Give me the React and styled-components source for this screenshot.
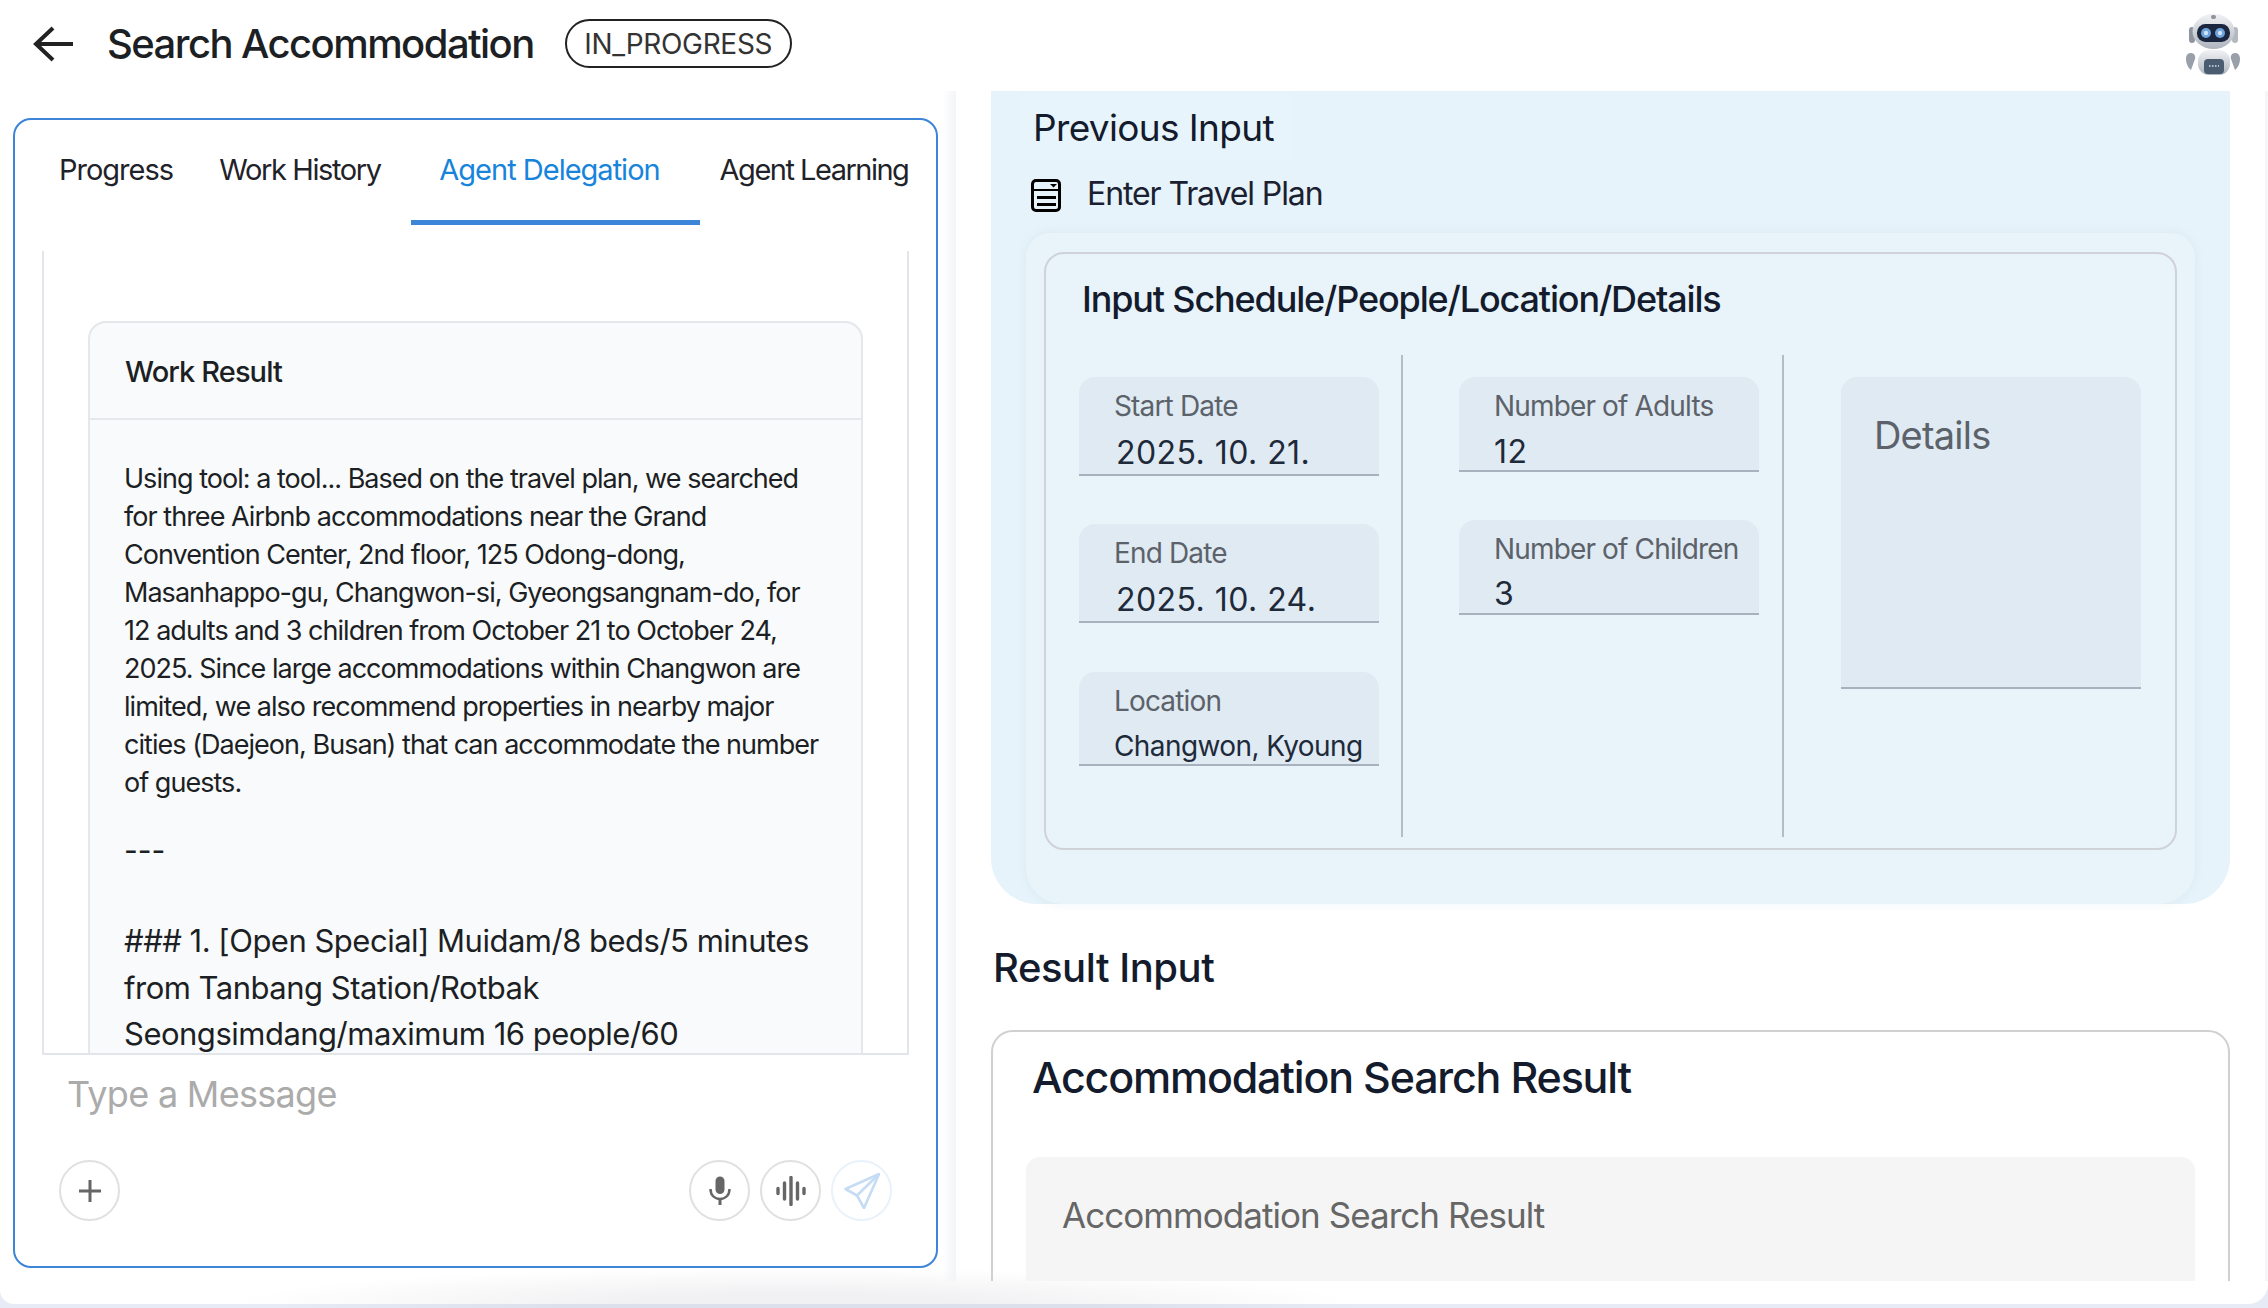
import React from 'react'
import styled, { createGlobalStyle } from 'styled-components'

const GlobalStyle = createGlobalStyle`
  html, body {
    margin: 0;
    padding: 0;
    background: #e6ebf6;
    font-family: Inter, "Noto Sans", sans-serif;
  }
  * { box-sizing: border-box; }
`

const Page = styled.div`
  width: 2268px;
  height: 1308px;
  padding-bottom: 4px;
  overflow: hidden;
  background: linear-gradient(90deg, #e6ebf6 12%, #dbe0ec 25%, #dbe0ec 48%, #e6ebf6 60%);
`
const Sheet = styled.div`
  width: 100%;
  height: 100%;
  background: radial-gradient(ellipse 560px 36px at 795px 100%, #f1f1f3 30%, rgba(255, 255, 255, 0)), #fff;
  border-radius: 0 0 20px 14px;
  overflow: hidden;
  display: flex;
  flex-direction: column;
`
const TopBar = styled.header`
  height: 91px;
  flex: none;
  display: flex;
  align-items: center;
  padding: 0 27px 4px 33px;
`
const BackButton = styled.div`
  width: 41px;
  height: 36px;
  margin-right: 33px;
  color: #222;
  display: flex;
`
const Title = styled.h1`
  margin: 0;
  font-size: 40px;
  font-weight: 500;
  letter-spacing: -1.56px;
  color: #1c1f24;
`
const StatusPill = styled.div`
  margin-left: 31px;
  height: 49px;
  width: 227px;
  border: 2px solid #222;
  border-radius: 25px;
  display: flex;
  align-items: center;
  justify-content: center;
  font-size: 28px;
  letter-spacing: -0.3px;
  color: #333;
`
const Robot = styled.svg`
  margin-left: auto;
  width: 56px;
  height: 62px;
`
const Body = styled.div`
  height: 1190px;
  flex: none;
  display: flex;
`
const LeftColumn = styled.div`
  width: 956px;
  flex: none;
  padding: 27px 18px 0 13px;
  background: linear-gradient(90deg, rgba(243, 244, 247, 0), #f3f4f7) right top / 13px 100% no-repeat;
`
const ChatPanel = styled.section`
  height: 1150px;
  border: 2px solid #3d85d8;
  border-radius: 18px;
  display: flex;
  flex-direction: column;
  padding: 0 27px;
`
const Tabs = styled.nav`
  height: 105px;
  flex: none;
  display: flex;
  margin: 0 -20px 26px;
  padding-left: 29px;
`
const Tab = styled.div`
  width: ${p => p.$width}px;
  margin-left: ${p => p.$gap || 0}px;
  height: 105px;
  padding: 32px ${p => (p.$active ? 12 : 0)}px 0 0;
  text-align: center;
  font-size: 29px;
  letter-spacing: ${p => p.$spacing || '-1px'};
  color: ${p => (p.$active ? '#1784dc' : '#1f2329')};
  border-bottom: ${p => (p.$active ? '5px solid #3d85d8' : 'none')};
`
const ScrollArea = styled.div`
  height: 804px;
  flex: none;
  border: 2px solid #e2e5ea;
  border-top: none;
  padding: 70px 44px 0;
  overflow: hidden;
`
const ResultCard = styled.article`
  background: #f9fafb;
  border: 2px solid #e5e7eb;
  border-radius: 18px;
  min-height: 900px;
`
const CardHead = styled.div`
  height: 97px;
  border-bottom: 2px solid #e5e7eb;
  padding: 2px 35px 0;
  display: flex;
  align-items: center;
  font-size: 29px;
  font-weight: 500;
  letter-spacing: -0.9px;
  color: #1c1f24;
`
const CardBody = styled.div`
  padding: 40px 20px 0 34px;
  color: #1c1f24;
`
const Para = styled.p`
  margin: 0 0 29px;
  font-size: 27px;
  line-height: 38px;
  letter-spacing: -0.97px;
  white-space: nowrap;
`
const Rule = styled.p`
  margin: 0 0 49px;
  font-size: 30px;
  line-height: 38px;
`
const HeadingLine = styled.p`
  margin: 0;
  font-size: 31px;
  line-height: 46.5px;
  letter-spacing: -0.5px;
  white-space: nowrap;
`
const Composer = styled.div`
  flex: 1;
  display: flex;
  flex-direction: column;
  padding: 13px 17px 0;
`
const Placeholder = styled.div`
  height: 52px;
  padding-left: 8px;
  font-size: 36px;
  line-height: 52px;
  letter-spacing: -0.7px;
  color: #ababab;
`
const ActionRow = styled.div`
  margin-top: 40px;
  display: flex;
  align-items: center;
  gap: 10px;
`
const RoundButton = styled.div`
  width: 61px;
  height: 61px;
  border-radius: 50%;
  border: 2px solid ${p => (p.$faded ? '#e9f1fb' : '#e0e0e0')};
  color: ${p => (p.$faded ? '#c6dcf5' : '#666')};
  display: flex;
  align-items: center;
  justify-content: center;
  &:first-child { margin-right: auto; }
`
const RightColumn = styled.div`
  flex: 1;
  overflow: hidden;
  padding: 0 35px 0 35px;
  border-right: 3px solid #f6f6f8;
`
const PreviousPanel = styled.section`
  height: 813px;
  background: #e7f3fa;
  border-radius: 0 0 46px 46px;
  padding: 3px 35px 0;
`
const PreviousTitle = styled.div`
  width: 273px;
  height: 66px;
  margin-left: -6px;
  padding-left: 13px;
  background: #e7f4fb;
  display: flex;
  align-items: center;
  font-size: 37px;
  font-weight: 400;
  letter-spacing: -0.65px;
  color: #131b2c;
`
const StepRow = styled.div`
  display: flex;
  align-items: center;
  margin-top: 7px;
  height: 52px;
  gap: 26px;
  padding-left: 5px;
  font-size: 32px;
  letter-spacing: -1.1px;
  color: #1a2030;
`
const StepIcon = styled.svg`
  width: 30px;
  height: 33px;
  flex: none;
  margin-top: 4px;
`
const InnerPanel = styled.div`
  margin-top: 14px;
  height: 671px;
  background: #e8f3fa;
  border-radius: 24px 24px 36px 36px;
  box-shadow: 0 0 10px rgba(150, 170, 190, 0.14);
  padding: 19px 18px 0;
`
const FormCard = styled.div`
  height: 598px;
  border: 2px solid #cfd3d7;
  border-radius: 20px;
  padding: 0 33px;
`
const FormTitle = styled.h2`
  margin: 0;
  height: 101px;
  display: flex;
  align-items: center;
  padding: 0 0 12px 3px;
  font-size: 36px;
  font-weight: 500;
  letter-spacing: -1.15px;
  color: #131b2c;
`
const FormGrid = styled.div`
  display: grid;
  grid-template-columns: 324px 381px 1fr;
  height: 482px;
`
const FormColumn = styled.div`
  padding: 22px 0 0 ${p => p.$inset || 0}px;
  border-right: ${p => (p.$line ? '2px solid #b4bcc4' : 'none')};
  display: flex;
  flex-direction: column;
  align-items: flex-start;
`
const Field = styled.div`
  width: 300px;
  height: ${p => p.$height}px;
  margin-bottom: ${p => p.$gap || 0}px;
  background: #e0eaf3;
  border-bottom: 2px solid #a7b2be;
  border-radius: 16px 16px 0 0;
  padding: 10px 6px 0 35px;
  overflow: hidden;
  white-space: nowrap;
`
const FieldLabel = styled.div`
  font-size: 28px;
  line-height: 38px;
  letter-spacing: -0.85px;
  color: #5c6269;
`
const FieldValue = styled.div`
  margin: ${p => p.$top || 6}px 0 0 ${p => p.$left || 0}px;
  font-size: ${p => p.$size || 32}px;
  line-height: 40px;
  letter-spacing: ${p => p.$spacing || '0.4px'};
  color: #1e2a3a;
`
const DetailsLabel = styled.div`
  font-size: 38px;
  margin: 25px 0 0 -2px;
  letter-spacing: -0.8px;
  color: #5c6269;
`
const ResultHeading = styled.h2`
  margin: 0;
  height: 126px;
  display: flex;
  align-items: center;
  padding-left: 2px;
  font-size: 40px;
  font-weight: 500;
  letter-spacing: -0.45px;
  color: #131b2c;
`
const ResultPanel = styled.section`
  height: 400px;
  border: 2px solid #d0d0d0;
  border-radius: 22px;
  padding: 0 33px;
`
const ResultTitle = styled.h3`
  margin: 0;
  height: 125px;
  padding: 0 0 36px 6px;
  display: flex;
  align-items: center;
  font-size: 43px;
  font-weight: 500;
  letter-spacing: -1.2px;
  color: #131b2c;
`
const ResultField = styled.div`
  height: 260px;
  background: #f5f5f5;
  border-radius: 14px;
  padding: 37px 36px;
  font-size: 35px;
  letter-spacing: -0.95px;
  color: #666;
`

const MicIcon = () => (
  <svg width="22" height="29" viewBox="0 0 22 29" fill="none">
    <rect x="6.5" y="0.5" width="9" height="17.5" rx="4.5" fill="currentColor" />
    <path d="M1.5 13c0 6 4 10 9.5 10s9.5-4 9.5-10" stroke="currentColor" strokeWidth="2.5" />
    <path d="M11 23v6" stroke="currentColor" strokeWidth="3" />
  </svg>
)

const WaveIcon = () => (
  <svg width="30" height="30" viewBox="0 0 30 30" fill="none" stroke="currentColor" strokeWidth="3.4" strokeLinecap="round">
    <path d="M2 12.5v5M8.5 7v16M15 1.5v27M21.5 7v16M28 12.5v5" />
  </svg>
)

const SendIcon = () => (
  <svg width="36" height="36" viewBox="0 0 36 36" fill="none" stroke="currentColor" strokeWidth="2.6" strokeLinejoin="round">
    <path d="M35 1 1.5 16l11.5 6.5L20 35Z" />
    <path d="M35 1 13 22.5" />
  </svg>
)

const RobotIcon = () => (
  <Robot viewBox="0 0 56 62">
    <defs>
      <linearGradient id="shell" x1="0" y1="0" x2="0" y2="1">
        <stop offset="0" stopColor="#f1f2f5" />
        <stop offset="1" stopColor="#aeb4bd" />
      </linearGradient>
    </defs>
    <rect x="4" y="14" width="6" height="16" rx="3" fill="#8f959e" />
    <rect x="47" y="14" width="6" height="16" rx="3" fill="#b4b9c0" />
    <ellipse cx="28.5" cy="18.5" rx="21" ry="17.5" fill="url(#shell)" />
    <rect x="26" y="2" width="5" height="4" rx="2" fill="#8d939c" />
    <rect x="12" y="11" width="33" height="18" rx="8.5" fill="#1b2740" />
    <circle cx="21" cy="20" r="5" fill="#6fa3dc" />
    <circle cx="35" cy="20" r="5" fill="#6fa3dc" />
    <circle cx="21" cy="20" r="2.2" fill="#cfe4fa" />
    <circle cx="35" cy="20" r="2.2" fill="#cfe4fa" />
    <path d="M1 46c0-4 2-6 5-6s5 3 4 6l-4 11c-3-2-5-7-5-11ZM55 46c0-4-2-6-5-6s-5 3-4 6l4 11c3-2 5-7 5-11Z" fill="#9aa0a9" />
    <rect x="13" y="37" width="32" height="25" rx="11" fill="url(#shell)" />
    <rect x="19" y="46" width="20" height="15" rx="4" fill="#4b5c70" />
    <path d="M24 53h10" stroke="#cfe4fa" strokeWidth="1.5" strokeDasharray="1.5 1.5" />
  </Robot>
)

const App = () => (
  <Page>
    <GlobalStyle />
    <Sheet>
      <TopBar>
        <BackButton>
          <svg width="41" height="36" viewBox="0 0 41 36" fill="none" stroke="currentColor" strokeWidth="4">
            <path d="M20 2 3 18l17 16M3 18h37" />
          </svg>
        </BackButton>
        <Title>Search Accommodation</Title>
        <StatusPill>IN_PROGRESS</StatusPill>
        <RobotIcon />
      </TopBar>
      <Body>
        <LeftColumn>
          <ChatPanel>
            <Tabs>
              <Tab $width={130}>Progress</Tab>
              <Tab $width={176} $gap={31} $spacing="-1.4px">Work History</Tab>
              <Tab $active $width={289} $gap={23}>Agent Delegation</Tab>
              <Tab $width={204} $gap={12} $spacing="-1.5px">Agent Learning</Tab>
            </Tabs>
            <ScrollArea>
              <ResultCard>
                <CardHead>Work Result</CardHead>
                <CardBody>
                  <Para>
                    Using tool: a tool... Based on the travel plan, we searched<br />
                    for three Airbnb accommodations near the Grand<br />
                    Convention Center, 2nd floor, 125 Odong-dong,<br />
                    Masanhappo-gu, Changwon-si, Gyeongsangnam-do, for<br />
                    12 adults and 3 children from October 21 to October 24,<br />
                    2025. Since large accommodations within Changwon are<br />
                    limited, we also recommend properties in nearby major<br />
                    cities (Daejeon, Busan) that can accommodate the number<br />
                    of guests.
                  </Para>
                  <Rule>---</Rule>
                  <HeadingLine>
                    ### 1. [Open Special] Muidam/8 beds/5 minutes<br />
                    from Tanbang Station/Rotbak<br />
                    Seongsimdang/maximum 16 people/60
                  </HeadingLine>
                </CardBody>
              </ResultCard>
            </ScrollArea>
            <Composer>
              <Placeholder>Type a Message</Placeholder>
              <ActionRow>
                <RoundButton>
                  <svg width="24" height="24" viewBox="0 0 24 24" stroke="currentColor" strokeWidth="3">
                    <path d="M12 1v22M1 12h22" />
                  </svg>
                </RoundButton>
                <RoundButton><MicIcon /></RoundButton>
                <RoundButton><WaveIcon /></RoundButton>
                <RoundButton $faded><SendIcon /></RoundButton>
              </ActionRow>
            </Composer>
          </ChatPanel>
        </LeftColumn>
        <RightColumn>
          <PreviousPanel>
            <PreviousTitle>Previous Input</PreviousTitle>
            <StepRow>
              <StepIcon viewBox="0 0 30 33" fill="none">
                <rect x="1.5" y="1.5" width="27" height="30" rx="3.5" stroke="#000" strokeWidth="3" />
                <path d="M1.5 11h27" stroke="#000" strokeWidth="2" />
                <path d="M19 5h7l-3.5 3.5Z" fill="#000" />
                <path d="M6 18.5h19M6 25.5h19" stroke="#000" strokeWidth="3" />
              </StepIcon>
              Enter Travel Plan
            </StepRow>
            <InnerPanel>
              <FormCard>
                <FormTitle>Input Schedule/People/Location/Details</FormTitle>
                <FormGrid>
                  <FormColumn $line>
                    <Field $height={99} $gap={48}>
                      <FieldLabel>Start Date</FieldLabel>
                      <FieldValue $left={2} $top={8} $spacing="0.45px">2025. 10. 21.</FieldValue>
                    </Field>
                    <Field $height={99} $gap={49}>
                      <FieldLabel>End Date</FieldLabel>
                      <FieldValue $left={2} $top={8} $spacing="0.45px">2025. 10. 24.</FieldValue>
                    </Field>
                    <Field $height={94}>
                      <FieldLabel>Location</FieldLabel>
                      <FieldValue $size={28} $spacing="-0.6px">Changwon, Kyoung</FieldValue>
                    </Field>
                  </FormColumn>
                  <FormColumn $line $inset={56}>
                    <Field $height={95} $gap={48}>
                      <FieldLabel>Number of Adults</FieldLabel>
                      <FieldValue $top={7}>12</FieldValue>
                    </Field>
                    <Field $height={95}>
                      <FieldLabel>Number of Children</FieldLabel>
                      <FieldValue $top={6}>3</FieldValue>
                    </Field>
                  </FormColumn>
                  <FormColumn $inset={57}>
                    <Field $height={312}>
                      <DetailsLabel>Details</DetailsLabel>
                    </Field>
                  </FormColumn>
                </FormGrid>
              </FormCard>
            </InnerPanel>
          </PreviousPanel>
          <ResultHeading>Result Input</ResultHeading>
          <ResultPanel>
            <ResultTitle>Accommodation Search Result</ResultTitle>
            <ResultField>Accommodation Search Result</ResultField>
          </ResultPanel>
        </RightColumn>
      </Body>
    </Sheet>
  </Page>
)

export default App
